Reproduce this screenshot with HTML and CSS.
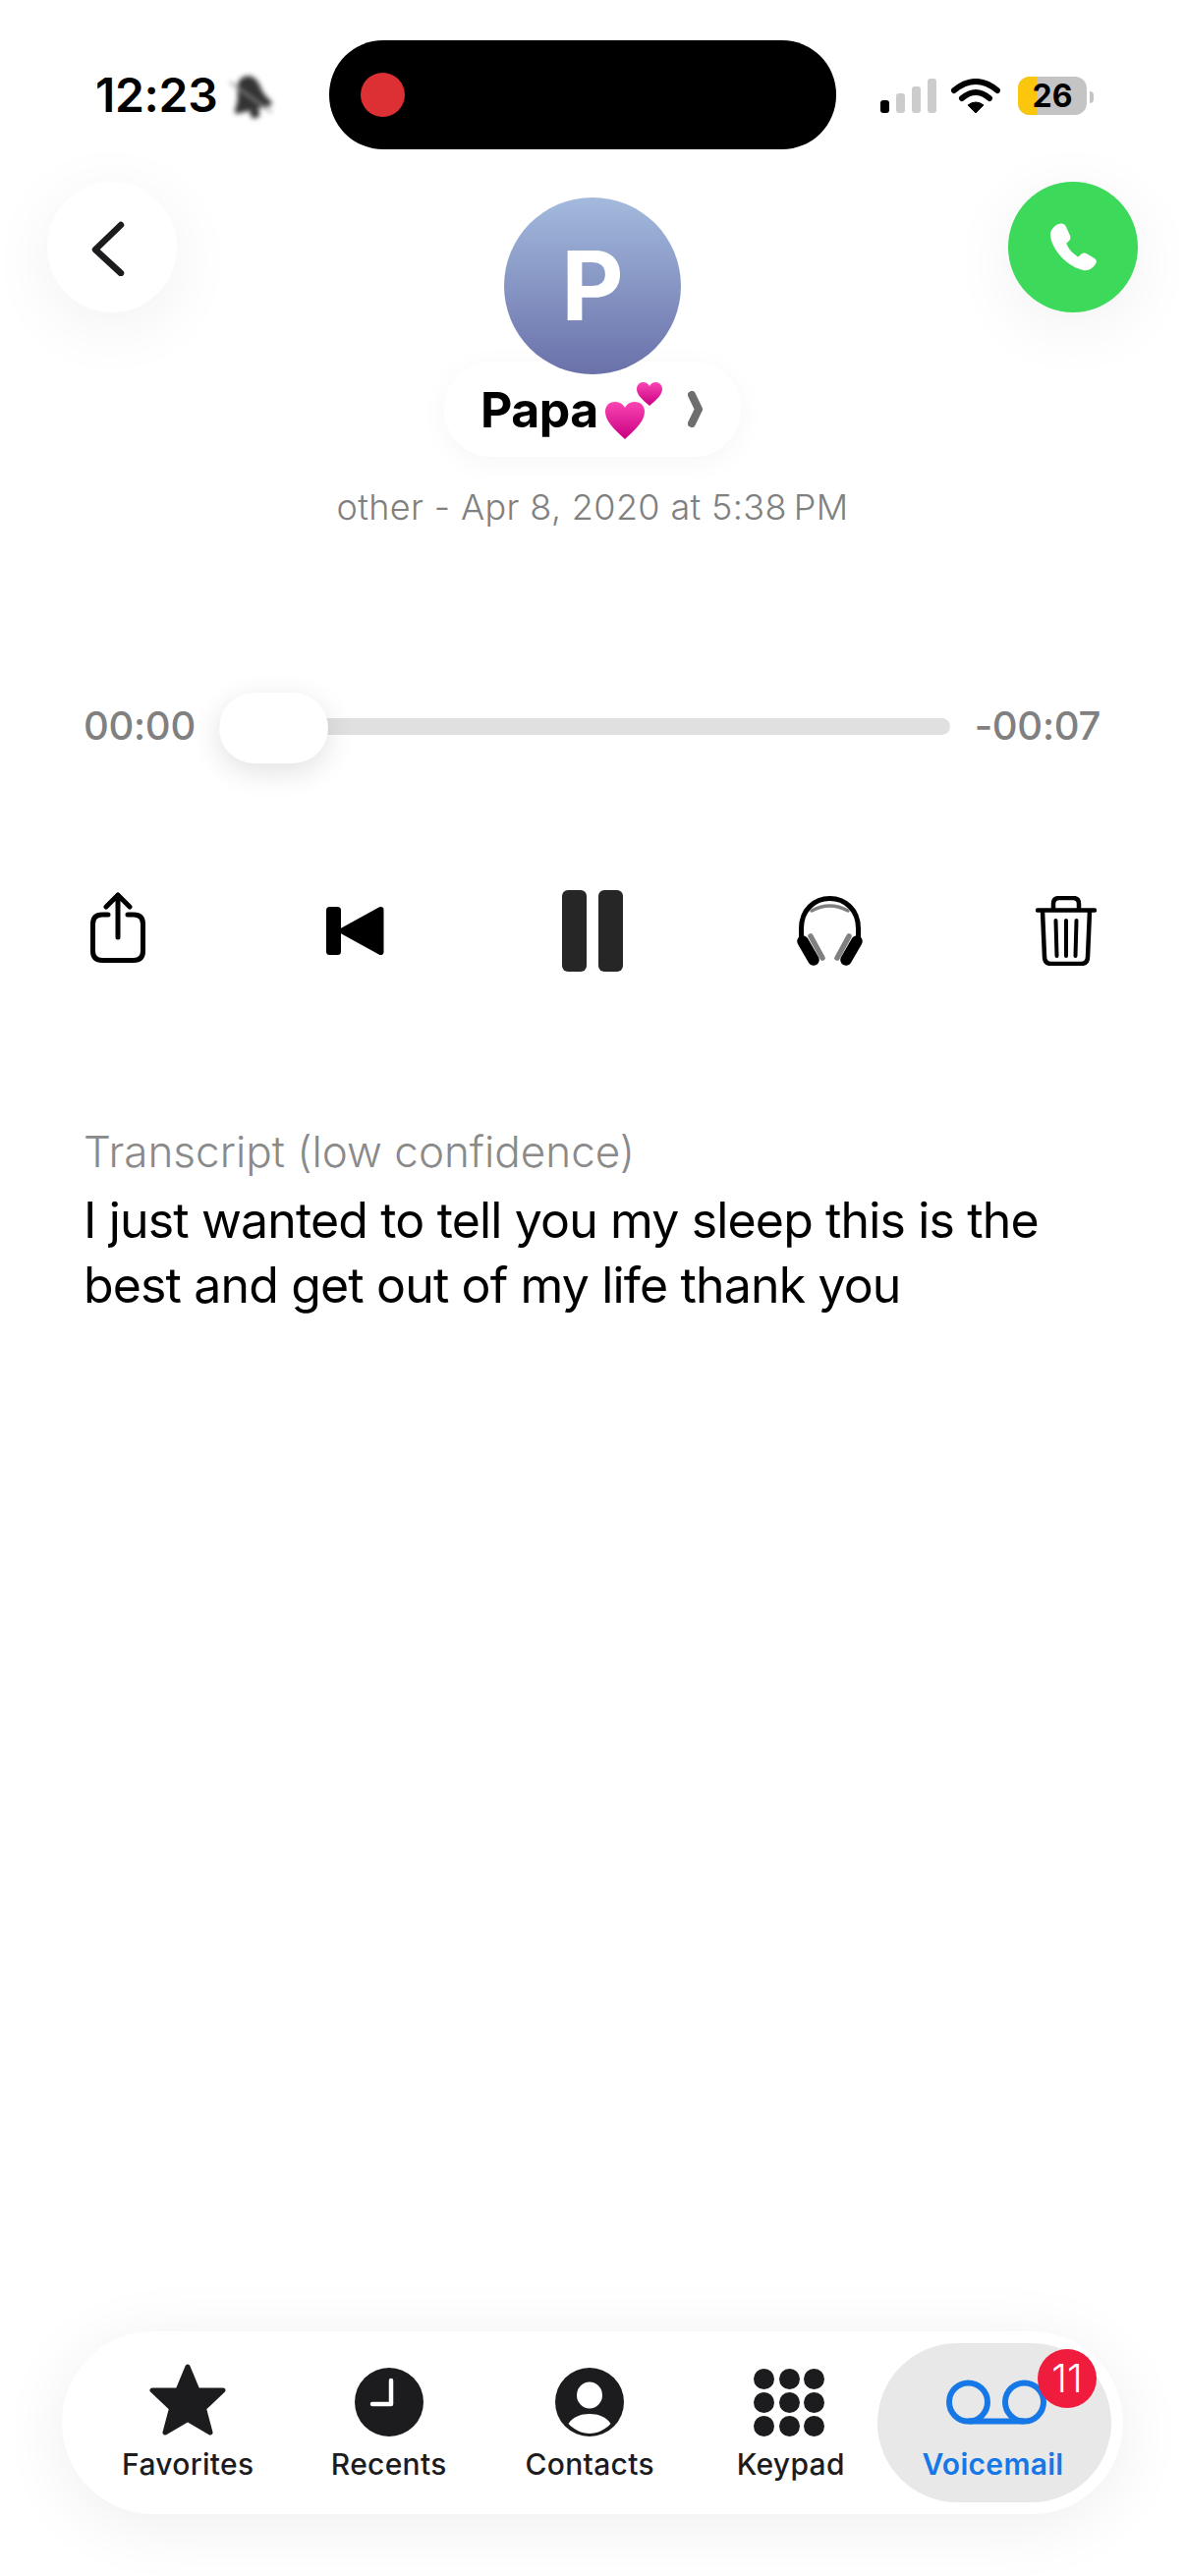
FILE: index.html
```html
<!DOCTYPE html>
<html lang="en">
<head>
    <meta charset="UTF-8">
    <meta name="viewport" content="width=device-width, initial-scale=1.0">
    <title>Voicemail</title>
    <link rel="stylesheet" href="styles.css">
</head>
<body>
    <div class="screen">
        <div class="status">
            <span class="clock">12:23</span>
            <svg class="bell" width="40" height="46" viewBox="0 0 40 46"><path d="M20 2c7 0 11 6 12 14 1 8 4 12 7 17 1 2 0 4-2 4H3c-2 0-3-2-2-4 3-5 6-9 7-17 1-8 5-14 12-14z" fill="#333"/><circle cx="20" cy="41" r="5" fill="#333"/><path d="M3 4L37 44" stroke="#999" stroke-width="2"/></svg>
            <div class="island"><span class="rec-dot"></span></div>
            <div class="signal">
                <span class="bar bar-1"></span>
                <span class="bar bar-2"></span>
                <span class="bar bar-3"></span>
                <span class="bar bar-4"></span>
            </div>
            <svg class="wifi" width="50" height="36" viewBox="0 0 50 36"><path d="M3 12Q25-6 47 12" fill="none" stroke="#000" stroke-width="6" stroke-linecap="round"/><path d="M11 20Q25 8 39 20" fill="none" stroke="#000" stroke-width="6" stroke-linecap="round"/><path d="M25 35L17 27Q25 21 33 27Z" fill="#000" stroke="#000" stroke-width="1" stroke-linejoin="round"/></svg>
            <div class="battery"><span class="battery-fill"></span><span class="battery-num">26</span></div>
            <span class="battery-tip"></span>
        </div>

        <div class="header">
            <div class="round-btn back">
                <svg class="back-arrow" width="34" height="56" viewBox="0 0 34 56"><path d="M30 4L4 29l26 24" fill="none" stroke="#1c1c1e" stroke-width="6.5" stroke-linecap="round" stroke-linejoin="round"/></svg>
            </div>
            <div class="contact">
                <div class="avatar">P</div>
                <div class="name-pill">
                    <span class="name">Papa</span>
                    <svg class="hearts" width="58" height="58" viewBox="0 0 58 58" role="img" aria-label="two hearts">
                        <defs><linearGradient id="heartFill" x1="0" y1="0" x2="0" y2="1"><stop offset="0" stop-color="#fb45b4"/><stop offset="1" stop-color="#c90080"/></linearGradient></defs>
                        <path d="M20 58C8 47 0 39 0 30c0-6 4-10 10-10 4 0 8 2 10 6 2-4 6-6 10-6 6 0 10 4 10 10 0 9-8 17-20 28z" fill="url(#heartFill)"/>
                        <path d="M45 24C38 18 32 13 32 7c0-4 3-7 6.500-7 3 0 5 1.500 6.500 4 1.500-2.500 3.500-4 6.500-4 3.500 0 6.500 3 6.500 7 0 6-6 11-13 17z" fill="url(#heartFill)"/>
                    </svg>
                    <svg class="name-arrow" width="15" height="37" viewBox="0 0 15 37"><path d="M4 4l7 14.500L4 33" fill="none" stroke="#6e6e6e" stroke-width="8" stroke-linecap="round" stroke-linejoin="round"/></svg>
                </div>
                <div class="date">other - Apr 8, 2020 at 5:38&#8239;PM</div>
            </div>
            <div class="round-btn call">
                <svg width="48" height="49" viewBox="0 0 46 47"><path d="M9 1C12-.5 15 1 16 3l4 9c1 2.500.5 4-1 5.500L16.500 20c2.500 6 6.500 10 11.500 13l3-2.500c2-1.500 3.500-1.500 5.500-.5l7.500 4.500c2 1.500 2.500 3.500 1 5.500-3 4.500-7 7-12 6C18 43 3 27 1 13 0 8 4 3 9 1z" fill="#fff"/></svg>
            </div>
        </div>

        <div class="player">
            <span class="time">00:00</span>
            <div class="slider">
                <div class="track"></div>
                <div class="thumb"></div>
            </div>
            <span class="time time-left">-00:07</span>
        </div>

        <div class="controls">
            <svg class="share" width="56" height="72" viewBox="0 0 56 72"><path d="M18 23H12Q2.500 23 2.500 32.500V60Q2.500 69.500 12 69.500H44Q53.500 69.500 53.500 60V32.500Q53.500 23 44 23H38" fill="none" stroke="#000" stroke-width="5" stroke-linecap="round"/><path d="M28 46V3M16 15L28 3l12 12" fill="none" stroke="#000" stroke-width="5" stroke-linecap="round" stroke-linejoin="round"/></svg>
            <svg width="59" height="49" viewBox="0 0 59 49"><rect width="15" height="49" rx="3.500" fill="#000"/><path d="M55.500 3L16.500 24.500l39 21.500z" fill="#000" stroke="#000" stroke-width="6" stroke-linejoin="round"/></svg>
            <div class="pause"><span></span><span></span></div>
            <svg width="67" height="71" viewBox="0 0 67 71"><path d="M4.500 42V33C4.500 14 18 2.500 33.500 2.500S62.500 14 62.500 33v9" fill="none" stroke="#000" stroke-width="5"/><path d="M15 15Q33.500 5 52 15" fill="none" stroke="#808080" stroke-width="3.500" stroke-linecap="round"/><path d="M6 46L17 65M61 46L50 65" fill="none" stroke="#000" stroke-width="11.500" stroke-linecap="round"/><path d="M14 41L26 63M53 41L41 63" fill="none" stroke="#808080" stroke-width="5.500" stroke-linecap="round"/></svg>
            <svg width="62" height="71" viewBox="0 0 62 71"><path d="M2 14.500H60" fill="none" stroke="#000" stroke-width="4.500" stroke-linecap="round"/><path d="M18 14V8Q18 2 24 2H38Q44 2 44 8V14" fill="none" stroke="#000" stroke-width="4.500"/><path d="M7 15L9 62Q9 69 16 69H46Q53 69 53 62L55 15" fill="none" stroke="#000" stroke-width="4.500"/><path d="M20.500 25L21.500 61M31 25V61M41.500 25L40.500 61" fill="none" stroke="#000" stroke-width="4" stroke-linecap="round"/></svg>
        </div>

        <div class="transcript">
            <div class="transcript-label">Transcript (low confidence)</div>
            <p class="transcript-text">I just wanted to tell you my sleep this is the best and get out of my life thank you</p>
        </div>

        <div class="tabbar">
            <div class="tab">
                <div class="tab-icon"><svg width="78" height="74" viewBox="0 0 78 74"><path d="M39 3L49 27H75L55.500 45.500L62 70L39 56.500L16 70L22.500 45.500L3 27H29Z" fill="#1c1c1e" stroke="#1c1c1e" stroke-width="5" stroke-linejoin="round"/></svg></div>
                <span class="tab-label">Favorites</span>
            </div>
            <div class="tab">
                <div class="tab-icon"><svg width="70" height="70" viewBox="0 0 70 70"><circle cx="35" cy="35" r="35" fill="#1c1c1e"/><path d="M37 13V37H18" fill="none" stroke="#fff" stroke-width="4.500" stroke-linecap="round" stroke-linejoin="round"/></svg></div>
                <span class="tab-label">Recents</span>
            </div>
            <div class="tab">
                <div class="tab-icon"><svg width="70" height="70" viewBox="0 0 70 70"><circle cx="35" cy="35" r="35" fill="#1c1c1e"/><ellipse cx="35" cy="28" rx="13" ry="13.500" fill="#fff"/><path d="M13.500 57C18 50 26 47 35 47S52 50 56.500 57C51 63 43 67 35 67S19 63 13.500 57z" fill="#fff"/></svg></div>
                <span class="tab-label">Contacts</span>
            </div>
            <div class="tab">
                <div class="tab-icon">
                    <div class="keypad">
                        <span></span><span></span><span></span>
                        <span></span><span></span><span></span>
                        <span></span><span></span><span></span>
                    </div>
                </div>
                <span class="tab-label">Keypad</span>
            </div>
            <div class="tab tab-active">
                <div class="tab-icon"><svg class="vm-icon" width="102" height="46" viewBox="0 0 102 46"><circle cx="22.500" cy="23" r="19.500" fill="none" stroke="#1678e6" stroke-width="6"/><circle cx="79.500" cy="23" r="19.500" fill="none" stroke="#1678e6" stroke-width="6"/><path d="M22.500 42.500H79.500" fill="none" stroke="#1678e6" stroke-width="6"/></svg></div>
                <span class="tab-label">Voicemail</span>
                <span class="badge">11</span>
            </div>
        </div>
    </div>
</body>
</html>
```

FILE: styles.css
```css
* {
    box-sizing: border-box;
}

body {
    margin: 0;
    background-color: #ffffff;
    font-family: 'Inter', 'Liberation Sans', sans-serif;
}

.screen {
    width: 1206px;
    height: 2622px;
    overflow: hidden;
    display: flex;
    flex-direction: column;
    background-color: #ffffff;
}

/* status bar */
.status {
    display: flex;
    align-items: flex-start;
    height: 152px;
    padding: 41px 0 0 97px;
}

.clock {
    width: 124px;
    margin-top: 32px;
    font-size: 48px;
    line-height: 48px;
    font-weight: 600;
    letter-spacing: -0.3px;
    color: #000;
}

.bell {
    margin: 34px 0 0 14px;
    filter: blur(2.5px);
    transform: rotate(-14deg);
}

.island {
    width: 516px;
    height: 111px;
    margin-left: 60px;
    padding: 33px 0 0 32px;
    border-radius: 55px;
    background-color: #000;
}

.rec-dot {
    display: block;
    width: 45px;
    height: 45px;
    border-radius: 50%;
    background-color: #dc3034;
}

.signal {
    display: flex;
    align-items: flex-end;
    gap: 7px;
    height: 35px;
    margin: 39px 0 0 45px;
}

.bar {
    width: 9px;
    border-radius: 3px;
    background-color: #cccccc;
}

.bar-1 {
    height: 13px;
    background-color: #000;
}

.bar-2 {
    height: 20px;
}

.bar-3 {
    height: 27px;
}

.bar-4 {
    height: 35px;
}

.wifi {
    margin: 39px 0 0 15px;
}

.battery {
    position: relative;
    width: 70px;
    height: 39px;
    margin: 37px 0 0 18px;
    overflow: hidden;
    border-radius: 12px;
    background-color: #c4c4c4;
    text-align: center;
}

.battery-fill {
    position: absolute;
    left: 0;
    top: 0;
    bottom: 0;
    width: 19px;
    background-color: #fbc70d;
}

.battery-num {
    position: relative;
    font-size: 32px;
    line-height: 39px;
    font-weight: 700;
    color: #000;
}

.battery-tip {
    width: 4px;
    height: 12px;
    margin: 52px 0 0 3px;
    border-radius: 0 4px 4px 0;
    background-color: #c4c4c4;
}

/* header */
.header {
    display: flex;
    justify-content: space-between;
    align-items: flex-start;
    margin-top: 33px;
    padding: 0 48px;
}

.round-btn {
    display: flex;
    align-items: center;
    justify-content: center;
    flex: none;
    width: 132px;
    height: 133px;
    border-radius: 50%;
    box-shadow: 0 14px 70px rgba(0, 0, 0, 0.06);
}

.back {
    background-color: #ffffff;
}

.back-arrow {
    margin: 3px 8px 0 0;
}

.call {
    background-color: #3dd95a;
}

.contact {
    display: flex;
    flex-direction: column;
    align-items: center;
    padding-top: 16px;
}

.avatar {
    position: relative;
    z-index: 1;
    width: 180px;
    height: 180px;
    border-radius: 50%;
    background: linear-gradient(#a3badd, #6a71aa);
    color: #fff;
    font-size: 98px;
    line-height: 180px;
    font-weight: 700;
    text-align: center;
}

.name-pill {
    display: flex;
    align-items: center;
    width: 302px;
    height: 97px;
    margin-top: -13px;
    padding-left: 37px;
    border-radius: 48px;
    background-color: #ffffff;
    box-shadow: 0 6px 30px rgba(0, 0, 0, 0.04);
}

.name {
    font-size: 50px;
    font-weight: 700;
    letter-spacing: -0.5px;
    color: #000;
}

.hearts {
    flex: none;
    margin: 3px 0 0 7px;
}

.name-arrow {
    flex: none;
    margin-left: 26px;
}

.date {
    margin-top: 29px;
    font-size: 36px;
    line-height: 44px;
    font-weight: 300;
    letter-spacing: 0.35px;
    color: #808080;
    white-space: nowrap;
}

/* player */
.player {
    display: flex;
    align-items: center;
    margin-top: 167px;
    padding: 0 86px 0 85px;
}

.time {
    margin-bottom: 5px;
    font-size: 40px;
    font-weight: 500;
    letter-spacing: -0.3px;
    color: #808080;
    white-space: nowrap;
}

.time-left {
    margin-left: 25px;
}

.slider {
    position: relative;
    flex: 1;
    display: flex;
    align-items: center;
    height: 72px;
    margin-left: 24px;
}

.track {
    width: 100%;
    height: 17px;
    margin-top: -3px;
    border-radius: 9px;
    background-color: #e0e0e0;
}

.thumb {
    position: absolute;
    left: 0;
    top: 0;
    width: 111px;
    height: 72px;
    border-radius: 36px;
    background-color: #ffffff;
    box-shadow: 0 8px 30px rgba(0, 0, 0, 0.12);
}

/* controls */
.controls {
    display: grid;
    grid-template-columns: repeat(5, 1fr);
    justify-items: center;
    align-items: center;
    margin-top: 129px;
}

.share {
    margin: 0 2px 7px 0;
}

.pause {
    display: flex;
    gap: 12px;
}

.pause span {
    width: 25px;
    height: 83px;
    border-radius: 6px;
    background-color: #262626;
}

/* transcript */
.transcript {
    margin-top: 157px;
    padding: 0 85px;
}

.transcript-label {
    font-size: 44px;
    line-height: 52px;
    font-weight: 300;
    color: #8a8a8a;
}

.transcript-text {
    margin: 11px 0 0;
    font-size: 50px;
    line-height: 66px;
    font-weight: 400;
    letter-spacing: -0.85px;
    color: #000;
}

/* tab bar */
.tabbar {
    display: flex;
    width: 1080px;
    height: 186px;
    margin: auto 0 63px 63px;
    padding: 12px 0 0 26px;
    border-radius: 93px;
    background-color: #ffffff;
    box-shadow: 0 10px 70px rgba(0, 0, 0, 0.07);
}

.tab {
    position: relative;
    display: flex;
    flex-direction: column;
    align-items: center;
    flex: none;
    width: 204.5px;
    height: 162px;
    padding-top: 21px;
}

.tab-active {
    width: 238px;
    margin-left: -14px;
    padding-right: 3px;
    border-radius: 81px;
    background-color: #e8e8e8;
}

.tab-icon {
    display: flex;
    align-items: flex-end;
    height: 74px;
}

.vm-icon {
    margin-bottom: 12px;
    margin-left: 6px;
}

.keypad {
    display: grid;
    grid-template-columns: repeat(3, 21px);
    grid-auto-rows: 21px;
    gap: 3px 4.5px;
    margin-right: 3px;
}

.keypad span {
    border-radius: 50%;
    background-color: #1c1c1e;
}

.tab-label {
    margin-top: 10px;
    font-size: 30px;
    line-height: 36px;
    font-weight: 500;
    letter-spacing: 0.3px;
    color: #1c1c1e;
}

.tab-active .tab-label {
    font-weight: 600;
    color: #1678e6;
}

.badge {
    position: absolute;
    left: 163px;
    top: 6px;
    width: 60px;
    height: 60px;
    border-radius: 50%;
    background-color: #ef1c3d;
    color: #fff;
    font-size: 40px;
    line-height: 60px;
    font-weight: 300;
    text-align: center;
}
```
